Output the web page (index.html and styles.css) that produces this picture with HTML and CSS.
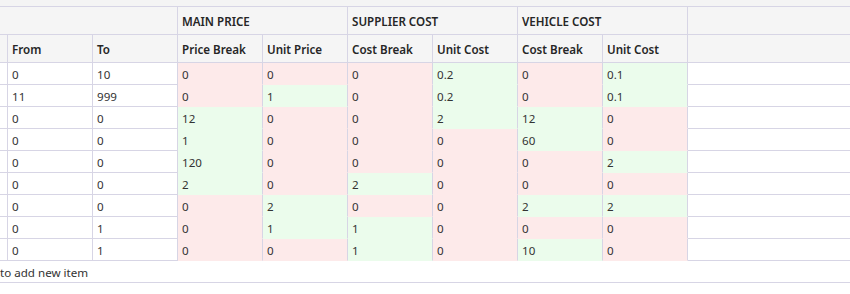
FILE: index.html
```html
<!DOCTYPE html>
<html>
<head>
<meta charset="utf-8">
<link rel="stylesheet" href="styles.css">
</head>
<body>
<div class="grid">
  <div class="topstrip"></div>
  <div class="row hrow">
    <div class="cell span-lead"></div>
    <div class="cell span2 bold">MAIN PRICE</div>
    <div class="cell span2 bold">SUPPLIER COST</div>
    <div class="cell span2 bold">VEHICLE COST</div>
    <div class="cell fill"></div>
  </div>
  <div class="row hrow">
    <div class="cell lead"></div>
    <div class="cell col bold">From</div>
    <div class="cell col bold">To</div>
    <div class="cell col bold">Price Break</div>
    <div class="cell col bold">Unit Price</div>
    <div class="cell col bold">Cost Break</div>
    <div class="cell col bold">Unit Cost</div>
    <div class="cell col bold">Cost Break</div>
    <div class="cell col bold">Unit Cost</div>
    <div class="cell fill"></div>
  </div>
  <div class="row drow"><div class="cell lead"></div><div class="cell col">0</div><div class="cell col">10</div><div class="cell col r">0</div><div class="cell col r">0</div><div class="cell col r">0</div><div class="cell col g">0.2</div><div class="cell col r">0</div><div class="cell col g">0.1</div><div class="cell fill"></div></div>
  <div class="row drow"><div class="cell lead"></div><div class="cell col">11</div><div class="cell col">999</div><div class="cell col r">0</div><div class="cell col g">1</div><div class="cell col r">0</div><div class="cell col g">0.2</div><div class="cell col r">0</div><div class="cell col g">0.1</div><div class="cell fill"></div></div>
  <div class="row drow"><div class="cell lead"></div><div class="cell col">0</div><div class="cell col">0</div><div class="cell col g">12</div><div class="cell col r">0</div><div class="cell col r">0</div><div class="cell col g">2</div><div class="cell col g">12</div><div class="cell col r">0</div><div class="cell fill"></div></div>
  <div class="row drow"><div class="cell lead"></div><div class="cell col">0</div><div class="cell col">0</div><div class="cell col g">1</div><div class="cell col r">0</div><div class="cell col r">0</div><div class="cell col r">0</div><div class="cell col g">60</div><div class="cell col r">0</div><div class="cell fill"></div></div>
  <div class="row drow"><div class="cell lead"></div><div class="cell col">0</div><div class="cell col">0</div><div class="cell col g">120</div><div class="cell col r">0</div><div class="cell col r">0</div><div class="cell col r">0</div><div class="cell col r">0</div><div class="cell col g">2</div><div class="cell fill"></div></div>
  <div class="row drow"><div class="cell lead"></div><div class="cell col">0</div><div class="cell col">0</div><div class="cell col g">2</div><div class="cell col r">0</div><div class="cell col g">2</div><div class="cell col r">0</div><div class="cell col r">0</div><div class="cell col r">0</div><div class="cell fill"></div></div>
  <div class="row drow"><div class="cell lead"></div><div class="cell col">0</div><div class="cell col">0</div><div class="cell col r">0</div><div class="cell col g">2</div><div class="cell col r">0</div><div class="cell col r">0</div><div class="cell col g">2</div><div class="cell col g">2</div><div class="cell fill"></div></div>
  <div class="row drow"><div class="cell lead"></div><div class="cell col">0</div><div class="cell col">1</div><div class="cell col r">0</div><div class="cell col g">1</div><div class="cell col g">1</div><div class="cell col r">0</div><div class="cell col r">0</div><div class="cell col r">0</div><div class="cell fill"></div></div>
  <div class="row drow"><div class="cell lead"></div><div class="cell col">0</div><div class="cell col">1</div><div class="cell col r">0</div><div class="cell col r">0</div><div class="cell col g">1</div><div class="cell col r">0</div><div class="cell col g">10</div><div class="cell col r">0</div><div class="cell fill"></div></div>
  <div class="row addrow">to add new item</div>
</div>
</body>
</html>
```
FILE: styles.css
```css
html, body {
  margin: 0;
  padding: 0;
  background: #ffffff;
}
body {
  font-family: "Noto Sans", "Open Sans", "Liberation Sans", sans-serif;
  font-size: 11.6px;
  color: #333333;
}
.grid {
  width: 850px;
  overflow: hidden;
}
.topstrip {
  height: 6px;
  background: #f4f4f4;
  border-bottom: 1px solid #d7d5e5;
}
.row {
  display: flex;
}
.cell {
  box-sizing: border-box;
  border-right: 1px solid #d7d5e5;
  border-bottom: 1px solid #d7d5e5;
  padding-left: 4px;
  padding-top: 1px;
  display: flex;
  align-items: center;
  white-space: nowrap;
  overflow: hidden;
  flex: none;
}
.hrow .cell {
  height: 28px;
  padding-top: 2px;
  background: #f5f5f5;
  color: #262626;
}
.drow .cell {
  height: 22px;
  background: #ffffff;
}
.bold {
  font-weight: 600;
}
.span-lead { width: 178px; }
.span2 { width: 170px; }
.lead { width: 8px; padding: 0; }
.col { width: 85px; }
.cell.fill {
  flex: 1;
  border-right: none;
}
.drow .cell.r {
  background: #fdeaea;
  border-bottom-color: #fdeaea;
}
.drow .cell.g {
  background: #ebfcec;
  border-bottom-color: #ebfcec;
}
.addrow {
  box-sizing: border-box;
  height: 22px;
  padding-top: 1px;
  align-items: center;
  border-bottom: 1px solid #d7d5e5;
  background: #ffffff;
  white-space: nowrap;
}
```
